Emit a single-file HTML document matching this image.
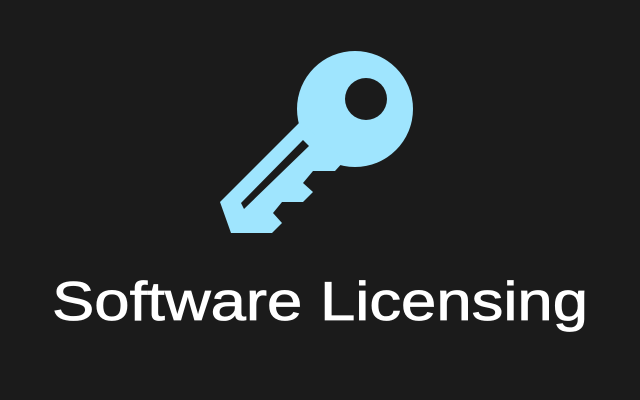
<!DOCTYPE html>
<html><head><meta charset="utf-8"><style>
html,body{margin:0;padding:0;background:#1b1b1b;width:640px;height:400px;overflow:hidden}
</style></head><body>
<svg width="640" height="400" viewBox="0 0 640 400" xmlns="http://www.w3.org/2000/svg">
<rect width="640" height="400" fill="#1b1b1b"/>
<g fill="#9fe5fe">
<circle cx="355" cy="109" r="58"/>
<path d="M300 122 L220 202 L231 233 L272 233 L282 223 L273 213 L282 202 L303 202 L313 192 L303 183 L313 171 L335 171 L345 160 Z"/>
</g>
<circle cx="366" cy="99" r="21" fill="#1b1b1b"/>
<path d="M303 140 L309 146 L244 209 L241 203 Z" fill="#1b1b1b"/>
<text x="52" y="320" font-family="Liberation Sans, sans-serif" font-size="55" fill="#fff" stroke="#fff" stroke-width="0.8" textLength="536" lengthAdjust="spacingAndGlyphs">Software Licensing</text>
</svg>
</body></html>
